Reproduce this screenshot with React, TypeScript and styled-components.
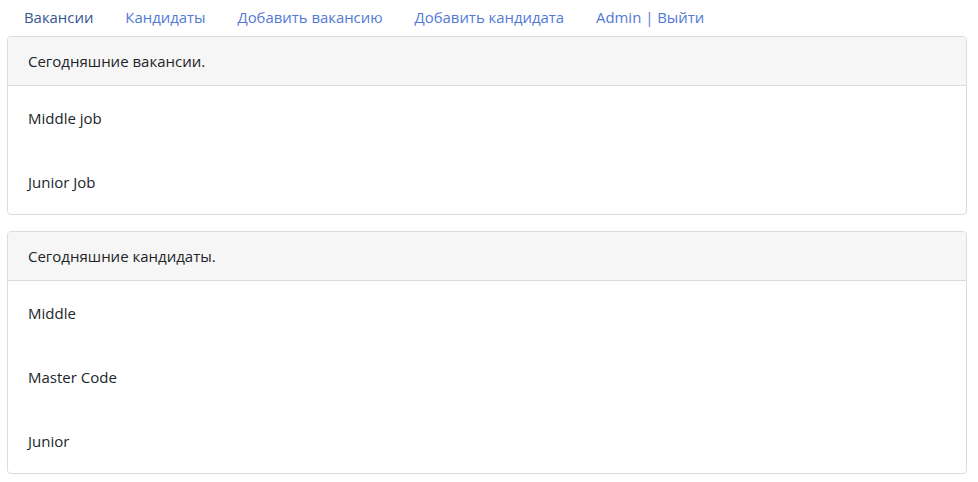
import React from "react";
import styled, { createGlobalStyle } from "styled-components";

const Global = createGlobalStyle`
  html, body { margin: 0; padding: 0; background: #fff; }
  body {
    font-family: "Open Sans", "Noto Sans", sans-serif;
    font-size: 15px;
    color: #212529;
  }
`;

const Page = styled.div`
  display: flex;
  flex-direction: column;
  padding: 0 11px 0 7px;
`;

const Nav = styled.nav`
  display: flex;
  height: 36px;
  box-sizing: border-box;
  align-items: center;
  padding: 0 0 3px 1px;
`;

const NavLink = styled.a<{ $active?: boolean }>`
  padding: 0 16px;
  font-size: 14.9px;
  line-height: 30px;
  color: ${(p) => (p.$active ? "#34548f" : "#5279d6")};
  text-decoration: none;
  white-space: nowrap;
`;

const Card = styled.section<{ $gap?: boolean }>`
  display: flex;
  flex-direction: column;
  border: 1px solid #dcdcdc;
  border-radius: 4px;
  margin-top: ${(p) => (p.$gap ? "16px" : "0")};
  overflow: hidden;
`;

const CardHeader = styled.div`
  background: #f6f6f6;
  border-bottom: 1px solid #dcdcdc;
  padding: 12px 20px;
  line-height: 24px;
`;

const Item = styled.div`
  padding: 20px;
  line-height: 24px;
  height: 64px;
  box-sizing: border-box;
`;

const sections = [
  { title: "Сегодняшние вакансии.", items: ["Middle job", "Junior Job"] },
  { title: "Сегодняшние кандидаты.", items: ["Middle", "Master Code", "Junior"] },
];

export default function App() {
  return (
    <>
      <Global />
      <Page>
        <Nav>
          <NavLink $active href="#">Вакансии</NavLink>
          <NavLink href="#">Кандидаты</NavLink>
          <NavLink href="#">Добавить вакансию</NavLink>
          <NavLink href="#">Добавить кандидата</NavLink>
          <NavLink href="#">Admin | Выйти</NavLink>
        </Nav>
        {sections.map((s, i) => (
          <Card key={s.title} $gap={i > 0}>
            <CardHeader>{s.title}</CardHeader>
            {s.items.map((it) => (
              <Item key={it}>{it}</Item>
            ))}
          </Card>
        ))}
      </Page>
    </>
  );
}
